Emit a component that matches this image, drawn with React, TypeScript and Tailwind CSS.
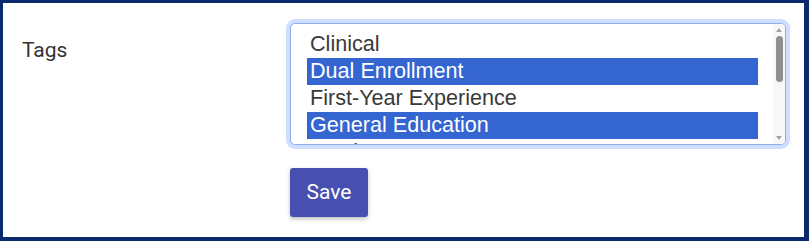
import React from "react";

const options = [
  { label: "Clinical", selected: false },
  { label: "Dual Enrollment", selected: true },
  { label: "First-Year Experience", selected: false },
  { label: "General Education", selected: true },
  { label: "Graduate", selected: false },
];

export default function App() {
  return (
    <div className="w-[809px] h-[241px] bg-white border-[#0b2a6e] border-t-[3px] border-l-[3px] border-r-[5px] border-b-[4px] flex">
      <div className="w-[287px] shrink-0 pl-[19px] pt-[33px] text-[21px] leading-[28px] text-[#333] font-['Roboto',sans-serif]">
        Tags
      </div>
      <div className="pt-[20px] flex flex-col items-start">
        <div className="w-[496px] h-[122px] rounded-[5px] border border-[#8aaef2] shadow-[0_0_0_4px_#cfdefd] bg-white flex overflow-hidden">
          <div className="pl-[16px] pt-[7px] w-[467px] shrink-0 overflow-hidden font-['Liberation_Sans',Arial,sans-serif] text-[21.6px]">
            {options.map((o) => (
              <div
                key={o.label}
                className={
                  o.selected
                    ? "h-[27px] leading-[26px] pl-[3px] bg-[#3465d0] text-white whitespace-nowrap"
                    : "h-[27px] leading-[26px] pl-[3px] text-[#3a3a3a] whitespace-nowrap"
                }
              >
                {o.label}
              </div>
            ))}
          </div>
          <div className="ml-auto w-[12px] h-full bg-[#f8f8f8] flex flex-col items-center">
            <div className="mt-[4px] w-0 h-0 border-l-[3px] border-r-[3px] border-b-[4px] border-l-transparent border-r-transparent border-b-[#a3a3a3]" />
            <div className="mt-[4px] w-[7px] h-[46px] rounded-full bg-[#8f8f8f]" />
            <div className="mt-auto mb-[4px] w-0 h-0 border-l-[3px] border-r-[3px] border-t-[4px] border-l-transparent border-r-transparent border-t-[#a3a3a3]" />
          </div>
        </div>
        <button className="mt-[23px] w-[78px] h-[49px] rounded-[3px] bg-[#474fb1] text-white text-[21px] font-normal font-['Roboto',sans-serif] shadow-[0_2px_4px_rgba(0,0,0,0.25)]">
          Save
        </button>
      </div>
    </div>
  );
}
